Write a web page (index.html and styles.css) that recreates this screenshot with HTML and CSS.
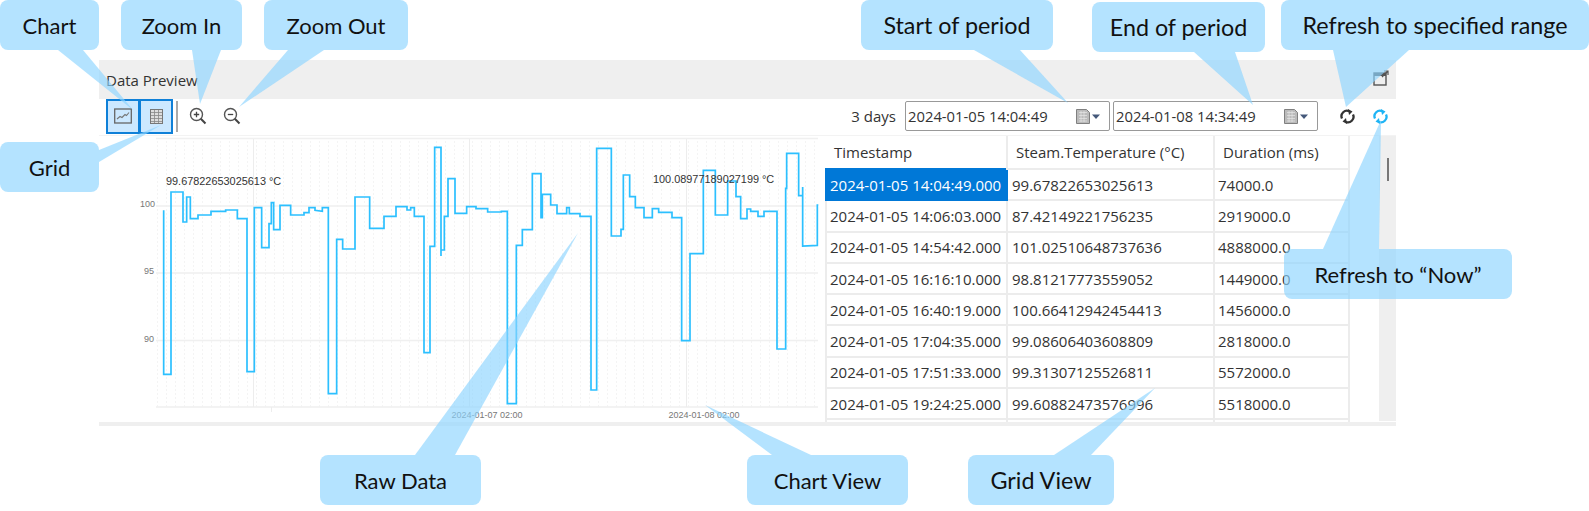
FILE: index.html
```html
<!DOCTYPE html>
<html lang="en">
<head>
<meta charset="utf-8">
<title>Data Preview</title>
<link rel="stylesheet" href="styles.css">
</head>
<body>
<div class="stage">
  <section class="panel">
    <header class="panel-head">
      <span class="panel-title">Data Preview</span>
      <svg class="popout" width="16" height="16" viewBox="0 0 16 16"><rect x="1" y="3" width="12" height="12" fill="none" stroke="#555" stroke-width="1.4"/><rect x="1" y="3" width="12" height="3" fill="#555"/><path d="M9 7 15 1M11 1h4v4" fill="none" stroke="#555" stroke-width="1.2"/></svg>
    </header>
    <div class="toolbar">
      <button class="tool on first"><svg width="18" height="16" viewBox="0 0 18 16"><rect x=".7" y="1" width="16.6" height="14" fill="none" stroke="#666" stroke-width="1.3"/><path d="M3 11 6 8.5 8 9.5 11 6.5 12.5 7.5 15 4.5" fill="none" stroke="#777" stroke-width="1.1"/></svg></button>
      <button class="tool on"><svg width="13" height="15" viewBox="0 0 13 15"><rect x=".5" y=".5" width="12" height="14" fill="#ddd" stroke="#777"/><path d="M4.5 1v13M8.5 1v13M1 3.5h11M1 6.5h11M1 9.5h11M1 12.5h11" stroke="#888" stroke-width=".8"/></svg></button>
      <span class="sep"></span>
      <button class="tool plain"><svg width="18" height="18" viewBox="0 0 18 18"><circle cx="7.5" cy="7.5" r="6" fill="none" stroke="#555" stroke-width="1.4"/><path d="M4.8 7.5h5.4M7.5 4.8v5.4" stroke="#444" stroke-width="1.3"/><path d="M11.8 11.8 16.5 16.5" stroke="#444" stroke-width="2"/></svg></button>
      <button class="tool plain"><svg width="18" height="18" viewBox="0 0 18 18"><circle cx="7.5" cy="7.5" r="6" fill="none" stroke="#555" stroke-width="1.4"/><path d="M4.8 7.5h5.4" stroke="#444" stroke-width="1.3"/><path d="M11.8 11.8 16.5 16.5" stroke="#444" stroke-width="2"/></svg></button>
      <span class="spacer"></span>
      <span class="range-label">3 days</span>
      <div class="date"><span>2024-01-05 14:04:49</span><svg width="25" height="15" viewBox="0 0 25 15"><path d="M.5.5h10l3 3v11H.5z" fill="#bbb" stroke="#808080"/><path d="M3 3.500h8M3 6.500h8M3 9.500h8M3 12h8M5 2v11M8 2v11" stroke="#e6e6e6" stroke-width=".7"/><path d="M16 5.500h8l-4 4.500z" fill="#44587a"/></svg></div>
      <div class="date"><span>2024-01-08 14:34:49</span><svg width="25" height="15" viewBox="0 0 25 15"><path d="M.5.5h10l3 3v11H.5z" fill="#bbb" stroke="#808080"/><path d="M3 3.500h8M3 6.500h8M3 9.500h8M3 12h8M5 2v11M8 2v11" stroke="#e6e6e6" stroke-width=".7"/><path d="M16 5.500h8l-4 4.500z" fill="#44587a"/></svg></div>
      <svg class="refresh first-refresh" width="15" height="15" viewBox="0 0 15 15"><g fill="none" stroke="#333" stroke-width="2.300"><path d="M2 9.500A5.500 5.500 0 0 1 9.500 2.300"/><path d="M13 5.500A5.500 5.500 0 0 1 5.500 12.700"/></g><path d="M8 0 12.500 2.500 9 6zM7 15 2.500 12.500 6 9z" fill="#333"/></svg>
      <svg class="refresh" width="15" height="15" viewBox="0 0 15 15"><g fill="none" stroke="#1eb4f5" stroke-width="2.300"><path d="M2 9.500A5.500 5.500 0 0 1 9.500 2.300"/><path d="M13 5.500A5.500 5.500 0 0 1 5.500 12.700"/></g><path d="M8 0 12.500 2.500 9 6zM7 15 2.500 12.500 6 9z" fill="#1eb4f5"/></svg>
    </div>
    <div class="content">
      <svg class="chart" width="726" height="287" viewBox="99 135 726 287">
        <defs>
          <pattern id="minor" x="157" y="0" width="9" height="4" patternUnits="userSpaceOnUse"><rect x="0" y="0" width="1" height="2" fill="#f4f4f4"/></pattern>
        </defs>
        <rect x="156" y="138" width="663" height="268" fill="url(#minor)"/>
        <path d="M156 137.500H818M156 205H818M156 272H818M156 339.500H818M156 406H818" stroke="#f0f0f0" stroke-width="1.500" fill="none"/>
        <path d="M253.500 138V406M469.500 138V406M686.500 138V406M271.500 406V411" stroke="#ededed" fill="none"/>
        <text class="ytick" x="155" y="206" text-anchor="end">100</text>
        <text class="ytick" x="154" y="273" text-anchor="end">95</text>
        <text class="ytick" x="154" y="341" text-anchor="end">90</text>
        <text class="xtick" x="487" y="417" text-anchor="middle">2024-01-07 02:00</text>
        <text class="xtick" x="704" y="417" text-anchor="middle">2024-01-08 02:00</text>
        <g class="series" transform="translate(150 130) scale(.33333)">
          <polyline points="41,238 41,730 63,730 63,183 99,183 99,273 110,273 110,198 121,198 121,263 144,263 144,252 183,252 183,241 227,241 227,237 262,237 262,263 291,263 291,722 313,722 313,230 335,230 335,350 357,350 357,278 364,278 364,215 371,215 371,296 390,296 390,223 422,223 422,252 462,252 462,245 477,245 477,230 495,230 495,238 517,241 517,230 535,230 535,788 560,788 560,325 578,325 578,354 615,354 615,198 659,198 659,292 702,292 702,256 738,256 738,227 771,227 771,237 782,237 782,230 793,230 793,256 822,256 822,665 840,665 840,346 854,346 854,49 873,49 873,375 873,357 883,357 883,256 894,256 894,143 915,143 915,247 950,247 950,227 978,227 978,233 1013,233 1013,243 1054,243 1054,241 1072,241 1072,818 1099,818 1099,343 1117,343 1117,296 1140,296"/>
        </g>
        <g class="series" transform="translate(530 130) scale(.33333)">
          <polyline points="0,296 7,296 7,128 33,128 33,260 37,260 37,190 62,190 62,222 81,222 81,248 110,248 110,230 118,230 118,248 150,248 150,256 183,256 183,777 200,777 200,52 244,52 244,315 273,315 273,295 280,295 280,132 299,132 299,197 316,197 316,230 342,230 342,260 367,260 367,233 386,233 386,244 426,244 426,260 455,260 455,629 480,629 480,368 520,368 520,118 556,118 556,252 593,252 593,150 618,150 618,197 632,197 632,263 651,263 651,234 662,234 662,241 684,241 684,256 702,256 702,241 741,241 741,654 767,654 767,172 770,172 770,67 806,67 806,194 818,194 818,168 818,345 862,343 862,222 865,222"/>
        </g>
        <text class="value" x="166" y="184">99.67822653025613 °C</text>
        <text class="value" x="653" y="182">100.08977189027199 °C</text>
      </svg>
      <div class="grid-wrap">
        <table class="grid">
          <thead><tr><th class="c1">Timestamp</th><th class="c2">Steam.Temperature (°C)</th><th class="c3">Duration (ms)</th></tr></thead>
          <tbody>
            <tr><td class="selected">2024-01-05 14:04:49.000</td><td>99.67822653025613</td><td>74000.0</td></tr>
            <tr><td>2024-01-05 14:06:03.000</td><td>87.42149221756235</td><td>2919000.0</td></tr>
            <tr><td>2024-01-05 14:54:42.000</td><td>101.02510648737636</td><td>4888000.0</td></tr>
            <tr><td>2024-01-05 16:16:10.000</td><td>98.81217773559052</td><td>1449000.0</td></tr>
            <tr><td>2024-01-05 16:40:19.000</td><td>100.66412942454413</td><td>1456000.0</td></tr>
            <tr><td>2024-01-05 17:04:35.000</td><td>99.08606403608809</td><td>2818000.0</td></tr>
            <tr><td>2024-01-05 17:51:33.000</td><td>99.31307125526811</td><td>5572000.0</td></tr>
            <tr><td>2024-01-05 19:24:25.000</td><td>99.60882473576996</td><td>5518000.0</td></tr>
            <tr><td>&nbsp;</td><td>&nbsp;</td><td>&nbsp;</td></tr>
          </tbody>
        </table>
      </div>
      <div class="scroll-track"><span class="scroll-thumb"></span></div>
    </div>
    <div class="panel-foot"></div>
  </section>

  <svg class="tails" width="1589" height="511" viewBox="0 0 1589 511">
    <polygon points="58,50 83,50 133,110"/>
    <polygon points="192,50 221,50 200,104"/>
    <polygon points="288,50 324,50 239,107"/>
    <polygon points="99,150 99,162 161,125"/>
    <polygon points="974,50 1020,50 1068,103"/>
    <polygon points="1194,52 1235,52 1253,105"/>
    <polygon points="1333,50 1409,50 1346,107"/>
    <polygon points="1323,249 1379,249 1381,120"/>
    <polygon points="415,455 455,455 578,233"/>
    <polygon points="772,455 811,455 705,405"/>
    <polygon points="1054,455 1091,455 1155,388"/>
  </svg>
  <div class="callout c-chart">Chart</div>
  <div class="callout c-zin">Zoom In</div>
  <div class="callout c-zout">Zoom Out</div>
  <div class="callout c-grid">Grid</div>
  <div class="callout large c-start">Start of period</div>
  <div class="callout large c-end">End of period</div>
  <div class="callout large c-range">Refresh to specified range</div>
  <div class="callout c-now">Refresh to “Now”</div>
  <div class="callout c-raw">Raw Data</div>
  <div class="callout c-cview">Chart View</div>
  <div class="callout large c-gview">Grid View</div>
</div>
</body>
</html>
```
FILE: styles.css
```css
* { box-sizing: border-box; }
html, body { margin: 0; padding: 0; background: #fff; }
.stage { position: relative; width: 1589px; height: 511px; overflow: hidden; padding: 60px 0 0 99px; font-family: "Open Sans", "Noto Sans", sans-serif; color: #222; }

.panel { width: 1297px; height: 366px; display: flex; flex-direction: column; }
.panel-head { height: 39px; flex: none; background: #efefef; display: flex; align-items: center; justify-content: space-between; padding: 0 7px 0 7px; }
.panel-title { font-size: 15px; color: #333; }
.popout { margin-top: -3px; }

.toolbar { height: 37px; flex: none; display: flex; align-items: center; padding: 0 8px 2px 7px; border-bottom: 1px solid #f3f3f3; }
.tool { width: 34px; height: 35px; padding: 0; margin: 0; display: flex; align-items: center; justify-content: center; background: none; border: 0; }
.tool.on { background: #cce8ff; border: 2px solid #0f80d8; }
.tool.first { margin-right: -1px; }
.tool.plain { width: 34px; }
.sep { width: 2px; height: 31px; background: #aaa; margin: 0 3px 0 3px; }
.spacer { flex: 1; }
.range-label { font-size: 15px; color: #333; margin-right: 9px; }
.date { width: 205px; height: 30px; margin-right: 3px; border: 1px solid #999; border-radius: 2px; display: flex; align-items: center; justify-content: space-between; padding: 0 8px 0 2px; font-size: 14.800px; color: #333; }
.refresh.first-refresh { margin-left: 19px; margin-right: 18px; }
.refresh { flex: none; }

.content { height: 286px; flex: none; display: flex; }
.chart { display: block; flex: none; }
.series polyline { fill: none; stroke: #2cc0ff; stroke-width: 1.700px; vector-effect: non-scaling-stroke; }
.ytick, .xtick { font-family: "Liberation Sans", sans-serif; font-size: 9px; fill: #777; }
.value { font-family: "Liberation Sans", sans-serif; font-size: 10.900px; fill: #333; }

.grid-wrap { width: 525px; flex: none; height: 286px; overflow: hidden; }
.grid { border-collapse: collapse; table-layout: fixed; width: 523px; font-size: 15px; color: #333; }
.grid th, .grid td { white-space: nowrap; overflow: hidden; font-weight: 400; text-align: left; }
.grid th { height: 33px; padding: 0 0 0 8px; border-right: 2px solid #ececec; }
.grid td { height: 31.300px; padding: 0 0 0 3px; border: 2px solid #ececec; }
.grid td:nth-child(2) { padding-left: 4px; }
.grid td:nth-child(3) { padding-left: 3px; }
.c1 { width: 181px; }
.c2 { width: 207px; }
.c3 { width: 135px; }
.grid td.selected { background: #0078d7; color: #fff; border-color: #0078d7; }

.scroll-track { margin-left: 29px; width: 17px; height: 285px; background: #efefef; padding: 22px 0 0 8px; }
.scroll-thumb { display: block; width: 2px; height: 23px; background: #777; }
.panel-foot { height: 4px; flex: none; background: #efefef; }

.tails { position: absolute; left: 0; top: 0; pointer-events: none; }
.tails polygon { fill: rgba(140, 212, 255, .65); }
.callout { position: absolute; height: 50px; border-radius: 8px; background: rgba(140, 212, 255, .65); display: flex; align-items: center; justify-content: center; font-family: Lato, "Open Sans", sans-serif; font-size: 22px; color: #111; white-space: nowrap; }
.callout.large { font-size: 23.300px; }
.c-chart { left: 0; top: 0; width: 99px; }
.c-zin { left: 121px; top: 0; width: 121px; }
.c-zout { left: 264px; top: 0; width: 144px; }
.c-grid { left: 0; top: 142px; width: 99px; }
.c-start { left: 861px; top: 0; width: 192px; }
.c-end { left: 1092px; top: 2px; width: 173px; }
.c-range { left: 1281px; top: 0; width: 308px; }
.c-now { left: 1284px; top: 249px; width: 228px; }
.c-raw { left: 320px; top: 455px; width: 161px; }
.c-cview { left: 747px; top: 455px; width: 161px; }
.c-gview { left: 968px; top: 455px; width: 146px; }
```
